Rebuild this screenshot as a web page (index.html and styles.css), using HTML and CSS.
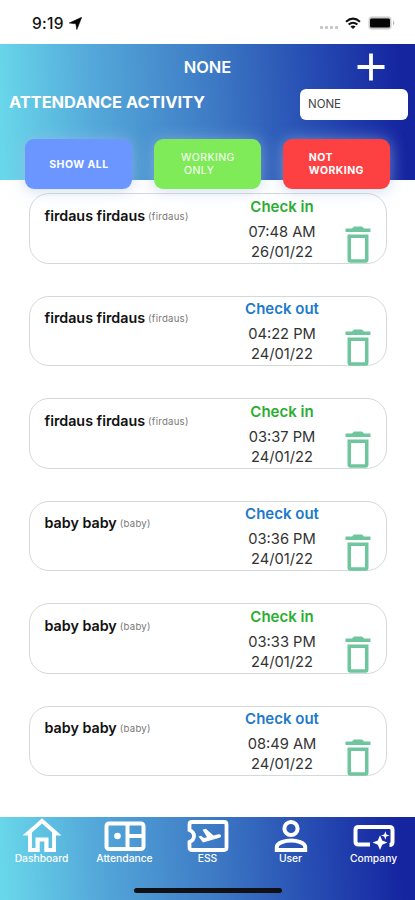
FILE: index.html
```html
<!DOCTYPE html>
<html lang="en">
<head>
<meta charset="utf-8">
<title>Attendance Activity</title>
<link rel="stylesheet" href="styles.css">
</head>
<body>
<svg class="defs" width="0" height="0">
  <symbol id="trash" viewBox="0 0 26 37"><path fill="currentColor" fill-rule="evenodd" d="M.5 2.5H7L9 .5H17L19 2.5H25.5V6H.5ZM2.5 8.5H23.5V33.5Q23.5 36.8 20.5 36.8H5.5Q2.5 36.8 2.5 33.5ZM6 12V33.3H20V12Z"/></symbol>
</svg>
<div class="status">
  <div class="clock"><span>9:19</span><svg width="13" height="13" viewBox="0 0 13 13"><path d="M12.7 .3 7.8 12.5 6.9 6.8 .3 6Z" stroke="#000" stroke-width=".6"/></svg></div>
  <div class="signals">
    <svg width="19" height="5" viewBox="0 0 19 5" fill="#c4c4c4"><rect x="0" y="1" width="3" height="3" rx="1"/><rect x="5" y="1" width="3" height="3" rx="1"/><rect x="10" y="1" width="3" height="3" rx="1"/><rect x="15" y="1" width="3" height="3" rx="1"/></svg>
    <svg class="wifi" width="16" height="13" viewBox="0 0 16 13" fill="none" stroke="#111" stroke-width="2"><path d="M1 4.8Q8-1.5 15 4.8M3.6 7.6Q8 3.8 12.4 7.6"/><path d="M8 12 5.4 9.5Q8 7.4 10.6 9.5Z" fill="#111" stroke="none"/></svg>
    <svg width="27" height="14" viewBox="0 0 27 14"><rect x=".5" y=".5" width="23" height="13" rx="3.5" fill="#c9c9c9"/><rect x="2" y="2.5" width="20" height="9" rx="1.5" fill="#050505"/><path d="M25 4.5Q28 7 25 9.5Z" fill="#bbb"/></svg>
  </div>
</div>
<header class="header">
  <div class="titlebar"><h1>NONE</h1>
    <svg class="plus" width="28" height="28" viewBox="0 0 28 28"><path d="M14 .5V27.5M.5 14H27.5" stroke="#fff" stroke-width="3.8"/></svg>
  </div>
  <div class="subbar"><h2>ATTENDANCE ACTIVITY</h2><div class="select">NONE</div></div>
  <div class="filters">
    <button class="all">SHOW ALL</button>
    <button class="working"><span>WORKING<br><i>ONLY</i></span></button>
    <button class="off"><span>NOT<br>WORKING</span></button>
  </div>
</header>
<main class="list">
  <article class="card"><p class="person"><b>firdaus firdaus</b><small>(firdaus)</small></p><div class="entry"><strong class="in">Check in</strong><span>07:48 AM</span><span>26/01/22</span></div><svg class="trash"><use href="#trash"/></svg></article>
  <article class="card"><p class="person"><b>firdaus firdaus</b><small>(firdaus)</small></p><div class="entry"><strong class="out">Check out</strong><span>04:22 PM</span><span>24/01/22</span></div><svg class="trash"><use href="#trash"/></svg></article>
  <article class="card"><p class="person"><b>firdaus firdaus</b><small>(firdaus)</small></p><div class="entry"><strong class="in">Check in</strong><span>03:37 PM</span><span>24/01/22</span></div><svg class="trash"><use href="#trash"/></svg></article>
  <article class="card"><p class="person"><b>baby baby</b><small>(baby)</small></p><div class="entry"><strong class="out">Check out</strong><span>03:36 PM</span><span>24/01/22</span></div><svg class="trash"><use href="#trash"/></svg></article>
  <article class="card"><p class="person"><b>baby baby</b><small>(baby)</small></p><div class="entry"><strong class="in">Check in</strong><span>03:33 PM</span><span>24/01/22</span></div><svg class="trash"><use href="#trash"/></svg></article>
  <article class="card"><p class="person"><b>baby baby</b><small>(baby)</small></p><div class="entry"><strong class="out">Check out</strong><span>08:49 AM</span><span>24/01/22</span></div><svg class="trash"><use href="#trash"/></svg></article>
</main>
<nav class="tabs">
  <div class="tabrow">
    <a><svg width="40" height="35" viewBox="0 0 40 35"><path d="M20 1.2 39.5 18.5H34V35H22.3V24.5H17.7V35H6V18.5H.5ZM20 6.5 9.9 15.6V31H13.5V20.5H26.5V31H30.1V15.6Z" fill="#fff" fill-rule="evenodd"/></svg><span>Dashboard</span></a>
    <a><svg width="42" height="35" viewBox="0 0 42 35" fill="none" stroke="#fff" stroke-width="4"><rect x="2.5" y="6.5" width="37" height="25.5" rx="2.5"/><path d="M23.5 6V32M23.5 19H39.5"/><circle cx="13.5" cy="19" r="3.3" fill="#fff" stroke="none"/></svg><span>Attendance</span></a>
    <a><svg width="42" height="35" viewBox="0 0 42 35" fill="none" stroke="#fff" stroke-width="3.8"><path d="M5 5H37Q39.5 5 39.5 7.5V30.5Q39.5 33 37 33H5Q2.5 33 2.5 30.5V25Q7 23 7 19T2.5 13V7.5Q2.5 5 5 5Z"/><path d="M11.5 15.5 14 14.8 17 17.1 20 16.3 15.5 8.7 18.8 7.8 26.5 14.6 31.5 13.3Q33.5 13 34 14.5T32.5 16.8L16 21.4Z" fill="#fff" stroke="none" transform="translate(0 4)"/></svg><span>ESS</span></a>
    <a><svg width="34" height="35" viewBox="0 0 34 35" fill="none" stroke="#fff" stroke-width="4"><circle cx="17" cy="11.5" r="6.6"/><path d="M2.8 33V30C2.8 25.5 11.5 23.4 17 23.4S31.2 25.5 31.2 30V33Z"/></svg><span>User</span></a>
    <a><svg width="42" height="35" viewBox="0 0 42 35"><path d="M17 27.5H5.5Q2.5 27.5 2.5 24.5V13Q2.5 10 5.5 10H36.5Q39.5 10 39.5 13V25Q39.5 28 36.5 28" fill="none" stroke="#fff" stroke-width="4"/><path d="M27 18.2 29.2 23.4 34.4 25.6 29.2 27.8 27 33 24.8 27.8 19.6 25.6 24.8 23.4ZM32.3 14.2 33.4 17.4 36.6 18.5 33.4 19.6 32.3 22.8 31.2 19.6 28 18.5 31.2 17.4Z" fill="#fff"/></svg><span>Company</span></a>
  </div>
  <div class="home"></div>
</nav>
</body>
</html>
```
FILE: styles.css
```css
* { box-sizing: border-box; }
body { margin: 0; width: 415px; height: 900px; overflow: hidden; background: #fff; font-family: Inter, "Liberation Sans", sans-serif; display: flex; flex-direction: column; white-space: nowrap; color: #222; }
h1, h2, p { margin: 0; }
svg { display: block; flex: none; }
.defs { position: absolute; }
.status { height: 44px; flex: none; display: flex; justify-content: space-between; padding: 0 20px 0 32px; }
.clock { display: flex; align-items: center; height: 46px; font-size: 15.5px; font-weight: 500; color: #111; gap: 5px; letter-spacing: .3px; }
.signals { display: flex; align-items: center; height: 46px; }
.signals svg:first-child { margin: 8px 6px 0 0; }
.wifi { margin-right: 7px; }
.header { height: 136px; flex: none; background: linear-gradient(86deg, #69d7ea 1%, #54a9da 23%, #3f7dc6 50%, #2850b4 73%, #1525a0 96%); color: #fff; position: relative; z-index: 1; }
.titlebar { height: 44px; display: grid; grid-template-columns: 44px 1fr 44px; align-items: center; padding-top: 1px; }
.titlebar h1 { grid-column: 2; text-align: center; font-size: 16.5px; font-weight: 600; }
.titlebar .plus { margin-left: -14px; }
.subbar { height: 32px; display: flex; align-items: center; justify-content: space-between; padding: 0 7px 0 9px; }
.subbar h2 { font-size: 16.4px; font-weight: 700; padding-bottom: 5px; }
.select { width: 108px; height: 31px; border-radius: 6px; background: #fff; color: #444; font-size: 11.5px; font-weight: 400; line-height: 31px; padding-left: 8px; }
.filters { display: flex; gap: 22px; padding: 19px 25px 0 25.4px; }
.filters button { width: 107px; height: 50px; flex: none; border: 0; border-radius: 9px; padding: 0; color: #fff; font: 700 10.5px/13px Inter, sans-serif; letter-spacing: .45px; display: flex; align-items: center; justify-content: center; box-shadow: 0 1px 16px rgba(165,190,230,.6); }
.all { background: #6c96ff; }
.filters .working { background: #7feb58; font-weight: 400; }
.working span, .off span { text-align: left; }
.working i { font-style: normal; padding-left: 3px; }
.off { background: #fd4143; }
.filters .off { margin-left: -.5px; }
.list { padding: 13.4px 28px 0 28.5px; display: grid; grid-template-columns: 358.5px; grid-auto-rows: 70.4px; gap: 32.1px; height: 637px; flex: none; align-content: start; }
.card { border: 1px solid #d3d9d9; border-radius: 20px; display: grid; grid-template-columns: 178px 119px 26px; padding-left: 15px; }
.person { display: flex; align-items: baseline; gap: 3px; padding-top: 12.5px; line-height: 18px; }
.person b { font-size: 14.3px; font-weight: 600; color: #111; }
.person small { font-size: 9.6px; letter-spacing: .25px; color: #777; position: relative; top: -1px; }
.entry { display: flex; flex-direction: column; align-items: center; font-size: 14.7px; line-height: 20px; color: #333; padding-top: 2.4px; }
.entry strong { font-size: 15px; font-weight: 600; margin-bottom: 5px; }
.in { color: #2bad32; }
.out { color: #2079ca; }
.trash { width: 26px; height: 37px; margin: 32px 0 0 3px; color: #6fc69e; }
.tabs { height: 83px; flex: none; background: linear-gradient(86deg, #69d7ea 1%, #54a9da 23%, #3f7dc6 50%, #2850b4 73%, #1525a0 96%); color: #fff; }
.tabrow { display: grid; grid-template-columns: repeat(5, 83px); height: 71px; }
.tabrow a { display: flex; flex-direction: column; align-items: center; font-size: 10.3px; line-height: 12px; font-weight: 500; }
.tabrow span { margin-top: .4px; }
.home { width: 148px; height: 5px; border-radius: 3px; margin: 0 auto; background: #111015; }
```
